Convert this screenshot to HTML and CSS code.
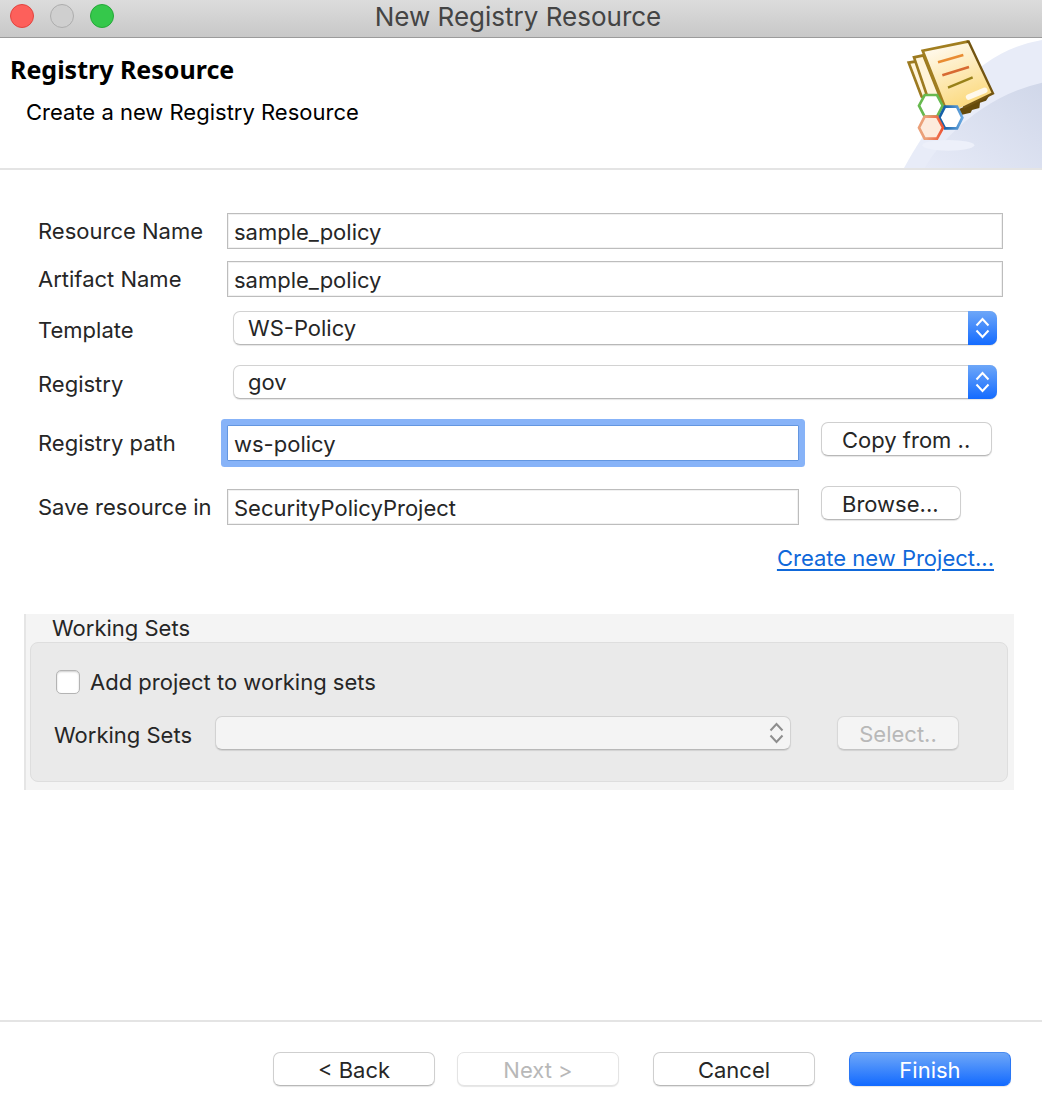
FILE: index.html
```html
<!DOCTYPE html>
<html lang="en">
<head>
<meta charset="utf-8">
<title>New Registry Resource</title>
<link rel="stylesheet" href="styles.css">
</head>
<body>
<header class="titlebar">
  <div class="lights">
    <button type="button" class="light light-close" aria-label="Close"></button>
    <button type="button" class="light" aria-label="Minimize" disabled></button>
    <button type="button" class="light light-zoom" aria-label="Zoom"></button>
  </div>
  <div class="window-title">New Registry Resource</div>
</header>

<section class="banner">
  <div class="banner-text">
    <h1>Registry Resource</h1>
    <p>Create a new Registry Resource</p>
  </div>
  <svg class="banner-art" viewBox="0 24 486 390" aria-hidden="true">
    <defs>
      <linearGradient id="swoosh" x1="0" y1="1" x2="1" y2="0">
        <stop offset="0" stop-color="#e6eaf7"/>
        <stop offset="1" stop-color="#d0d7e9"/>
      </linearGradient>
      <linearGradient id="sheet" x1="0" y1="0" x2="0.4" y2="1">
        <stop offset="0.1" stop-color="#fffaf0"/>
        <stop offset="1" stop-color="#fbd97c"/>
      </linearGradient>
      <linearGradient id="orange" x1="0" y1="0" x2="1" y2="0">
        <stop offset="0.3" stop-color="#eba078"/>
        <stop offset="1" stop-color="#ee5434"/>
      </linearGradient>
      <linearGradient id="blue" x1="0" y1="0" x2="1" y2="0">
        <stop offset="0.2" stop-color="#1560a8"/>
        <stop offset="1" stop-color="#69a8e0"/>
      </linearGradient>
    </defs>
    <path d="M72 414C140 290 230 170 310 105Q390 46 486 30V414Z" fill="#e8ecf8"/>
    <path d="M134 414C170 350 240 280 310 234Q390 180 486 158V414Z" fill="url(#swoosh)"/>
    <ellipse cx="205" cy="346" rx="78" ry="16" fill="#edf0fa"/>
    <path d="M236 238L330 194L318 212L300 218L298 234L276 240L272 248L246 254Z" fill="#654a0b"/>
    <path d="M125 200L86 98L110 94L170 226Z" fill="#fff4da" stroke="#9c7a20" stroke-width="8"/>
    <path d="M142 200L102 82L130 76L190 226Z" fill="#fff4da" stroke="#9c7a20" stroke-width="8"/>
    <path d="M128 62L266 34L339 190L202 250Z" fill="url(#sheet)"/>
    <path d="M202 250L128 62L266 34" fill="none" stroke="#a17e20" stroke-width="8"/>
    <path d="M260 36L266 35L339 190L250 233" fill="none" stroke="#735511" stroke-width="7"/>
    <path d="M266 201L314 181" stroke="#fff9ec" stroke-width="17" stroke-linecap="round"/>
    <path d="M174 97L250 75" stroke="#e98c32" stroke-width="8"/>
    <path d="M187 136L267 111" stroke="#d76a32" stroke-width="8"/>
    <path d="M204 173L278 142" stroke="#988119" stroke-width="7"/>
    <path d="M134 195H171L188 227L171 260H134L117 227Z" fill="#fff" stroke="#67b94f" stroke-width="8"/>
    <path d="M195 230H231L247 263L231 295H195L178 263Z" fill="#fff" stroke="url(#blue)" stroke-width="8"/>
    <path d="M134 260H171L189 293L171 326H134L117 293Z" fill="#fdebdd" stroke="url(#orange)" stroke-width="8"/>
  </svg>
</section>

<form class="wizard">
  <main class="fields">
    <div class="row">
      <label for="resource">Resource Name</label>
      <input class="text" id="resource" type="text" value="sample_policy">
    </div>
    <div class="row">
      <label for="artifact">Artifact Name</label>
      <input class="text" id="artifact" type="text" value="sample_policy">
    </div>
    <div class="row row-popup">
      <label for="template">Template</label>
      <div class="popup">
        <select id="template"><option>WS-Policy</option></select>
        <svg class="cap" viewBox="0 0 29 34" aria-hidden="true"><path d="M8.500 14.500L14.500 8L20.500 14.500M8.500 19.500L14.500 26L20.500 19.500"/></svg>
      </div>
    </div>
    <div class="row row-popup">
      <label for="registry">Registry</label>
      <div class="popup">
        <select id="registry"><option>gov</option></select>
        <svg class="cap" viewBox="0 0 29 34" aria-hidden="true"><path d="M8.500 14.500L14.500 8L20.500 14.500M8.500 19.500L14.500 26L20.500 19.500"/></svg>
      </div>
    </div>
    <div class="row row-action">
      <label for="path">Registry path</label>
      <input class="text focused" id="path" type="text" value="ws-policy">
      <div class="action"><button type="button" class="btn">Copy from ..</button></div>
    </div>
    <div class="row row-action">
      <label for="save">Save resource in</label>
      <input class="text" id="save" type="text" value="SecurityPolicyProject">
      <div class="action"><button type="button" class="btn">Browse...</button></div>
    </div>
    <a class="new-project" href="#">Create new Project...</a>
  </main>

  <fieldset class="sets">
    <legend>Working Sets</legend>
    <div class="sets-box">
      <div class="check">
        <input type="checkbox" id="add">
        <label for="add">Add project to working sets</label>
      </div>
      <div class="sets-row">
        <label for="sets">Working Sets</label>
        <div class="popup">
          <select id="sets" disabled><option value="" label=" "></option></select>
          <svg class="cap cap-off" viewBox="0 0 29 34" aria-hidden="true"><path d="M8.500 14.500L14.500 8L20.500 14.500M8.500 19.500L14.500 26L20.500 19.500"/></svg>
        </div>
        <button type="button" class="btn" disabled>Select..</button>
      </div>
    </div>
  </fieldset>

  <footer class="footer">
    <button type="button" class="btn">&lt; Back</button>
    <button type="button" class="btn" disabled>Next &gt;</button>
    <button type="button" class="btn apart">Cancel</button>
    <button type="submit" class="btn primary apart">Finish</button>
  </footer>
</form>
</body>
</html>
```
FILE: styles.css
```css
* { box-sizing: border-box; }

body {
  margin: 0;
  min-height: 100vh;
  display: flex;
  flex-direction: column;
  background: #fff;
  color: #262626;
  font: 22px/28px Inter, "Liberation Sans", sans-serif;
}

input, select, button { font: inherit; color: inherit; margin: 0; }

.titlebar {
  display: grid;
  grid-template-columns: 1fr auto 1fr;
  height: 38px;
  padding: 0 16px 0 10px;
  background: linear-gradient(#dcdcdc, #c8c8c8);
  border-bottom: 1px solid #9b9b9b;
}
.lights { display: flex; gap: 16px; padding-top: 4px; }
.light {
  width: 24px;
  height: 24px;
  padding: 0;
  border: 1px solid #adadad;
  border-radius: 50%;
  background: #cfcfcf;
}
.light-close { background: #fd605b; border-color: #e2443f; }
.light-zoom { background: #35c84b; border-color: #25a838; }
.window-title { font-size: 26px; line-height: 34px; color: #444; }

.banner {
  display: flex;
  justify-content: space-between;
  height: 132px;
  border-bottom: 2px solid #e4e4e4;
  color: #000;
}
.banner-text { padding: 15px 0 0 10px; }
.banner h1 { margin: 0; font: bold 25px/32px "Noto Sans", "Open Sans", sans-serif; }
.banner p { margin: 13px 0 0 16px; }
.banner-art { width: 162px; height: 130px; }

.wizard { flex: 1; display: flex; flex-direction: column; }
.fields {
  display: flex;
  flex-direction: column;
  padding: 43px 39px 0 38px;
}
.row {
  display: grid;
  grid-template-columns: 189px 1fr;
  align-items: center;
  margin-bottom: 12px;
}
.row-popup { padding: 2px 6px 0 0; margin-bottom: 18px; }
.row-popup label { padding-top: 4px; }
.row-popup .popup { margin-left: 6px; }
.row-action {
  grid-template-columns: 189px 1fr 172px;
  margin: 5px 10px 17px 0;
}
.action { display: flex; padding: 0 0 8px; }
.row-action .text { width: auto; margin-right: 22px; }

.text {
  width: 100%;
  height: 36px;
  padding: 2px 6px 0;
  border: 1px solid #bdbdbd;
  border-radius: 0;
  outline: 0;
  background: #fff;
  box-shadow: inset 0 0 0 1px #f1f1f1;
}
.focused {
  border-color: #6396e0;
  box-shadow: 0 0 0 6px #87b3f8;
  border-radius: 1px;
}

.popup { display: grid; }
.popup select, .popup svg { grid-area: 1 / 1; }
.popup select {
  appearance: none;
  height: 34px;
  padding: 0 40px 0 14px;
  border: 1px solid #d2d2d2;
  border-bottom-color: #b8b8b8;
  border-radius: 7px;
  background: #fff;
  box-shadow: 0 1px 1px #0000001a;
}
.popup select:disabled { background: #f4f4f4; opacity: 1; }
.cap {
  justify-self: end;
  width: 29px;
  height: 34px;
  border-radius: 0 7px 7px 0;
  background: linear-gradient(#6ea7f8, #146bff);
  fill: none;
  stroke: #fff;
  stroke-width: 2;
  pointer-events: none;
}
.cap-off { background: none; stroke: #8e8e8e; }

.btn {
  height: 34px;
  padding: 2px 20px 0;
  border: 1px solid #cfcfcf;
  border-bottom-color: #b8b8b8;
  border-radius: 7px;
  background: #fff;
  line-height: 28px;
  white-space: nowrap;
  box-shadow: 0 1px 1px #0000001a;
}
.btn:disabled { color: #b8b8b8; border-color: #e4e4e4; }
.btn.primary {
  border-color: #4a8cf0 #2a77f5 #146bff;
  background: linear-gradient(#6ea7f8, #146bff);
  color: #fff;
}

.new-project {
  align-self: flex-end;
  margin-right: 9px;
  line-height: 26px;
  color: #0f68da;
  text-underline-offset: 3px;
  text-decoration-thickness: 2px;
}

.sets {
  min-width: 0;
  margin: 43px 28px 0 24px;
  padding: 0 6px 8px 4px;
  border: 0;
  border-left: 2px solid #e5e5e5;
  background: #f4f4f4;
}
.sets legend { float: left; width: 100%; padding: 0 0 0 22px; }
.sets-box {
  clear: both;
  height: 140px;
  padding: 25px 48px 0 23px;
  border: 1px solid #dedede;
  border-radius: 8px;
  background: #eaeaea;
}
.check { display: flex; align-items: center; gap: 10px; padding-left: 2px; }
.check input {
  appearance: none;
  width: 24px;
  height: 24px;
  border: 1px solid #b4b4b4;
  border-radius: 5px;
  background: #fff;
  box-shadow: inset 0 1px 2px #0003;
}
.sets-row {
  display: grid;
  grid-template-columns: 161px 1fr 122px;
  align-items: center;
  margin-top: 20px;
}
.sets-row label { padding-top: 3px; }
.sets-row .popup { margin-right: 46px; }
.sets-row .btn { background: #f4f4f4; border-color: #d8d8d8; border-bottom-color: #c4c4c4; }

.footer {
  display: flex;
  justify-content: flex-end;
  gap: 22px;
  height: 100px;
  margin-top: auto;
  padding: 30px 31px 0;
  border-top: 2px solid #e4e4e4;
}
.footer .btn { width: 162px; }
.apart { margin-left: 12px; }
.action .btn { padding: 2px 21px 0 20px; }
```
